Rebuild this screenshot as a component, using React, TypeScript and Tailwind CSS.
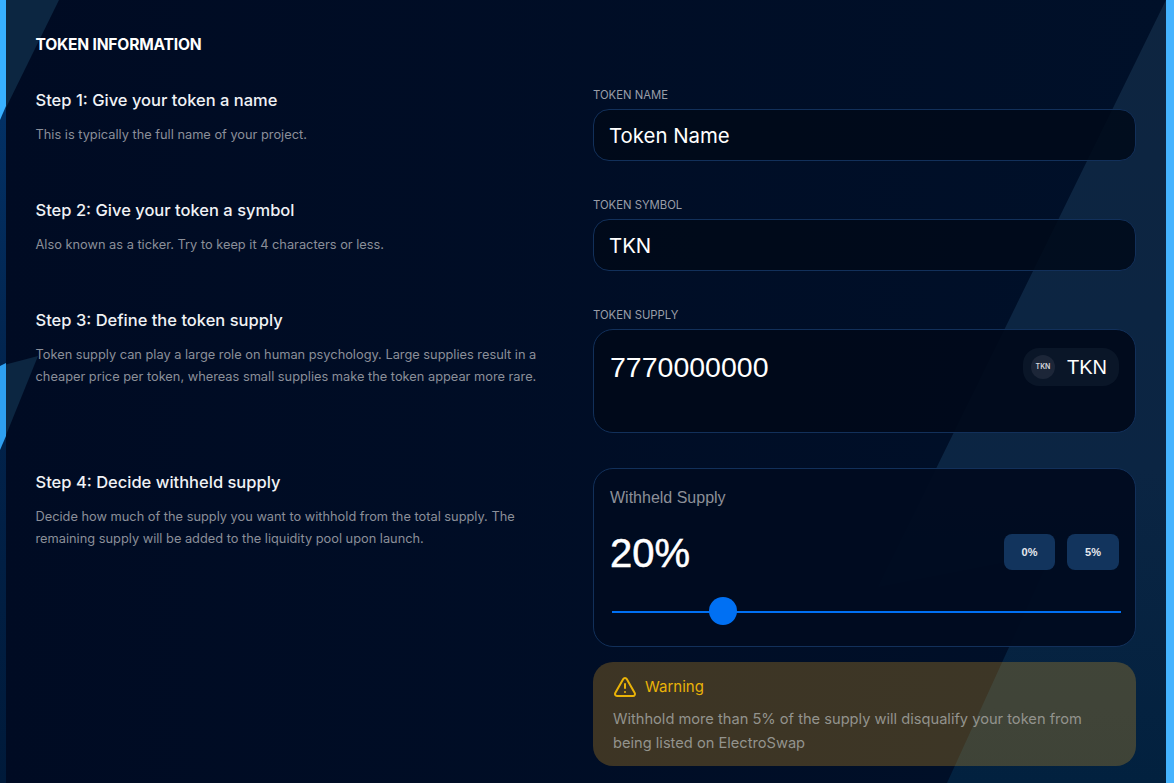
import { TriangleAlert } from "lucide-react";

const steps = [
  {
    title: "Step 1: Give your token a name",
    body: ["This is typically the full name of your project."],
    h: "h-[110px]",
  },
  {
    title: "Step 2: Give your token a symbol",
    body: ["Also known as a ticker. Try to keep it 4 characters or less."],
    h: "h-[110px]",
  },
  {
    title: "Step 3: Define the token supply",
    body: [
      "Token supply can play a large role on human psychology. Large supplies result in a",
      "cheaper price per token, whereas small supplies make the token appear more rare.",
    ],
    h: "h-[162px]",
  },
];

function Background() {
  return (
    <svg className="absolute inset-0 h-full w-full" viewBox="0 0 1174 783" aria-hidden="true">
      <defs>
        <linearGradient id="base" x1="0" y1="0" x2="1" y2="0">
          <stop offset="0" stopColor="#000b23" />
          <stop offset="1" stopColor="#001029" />
        </linearGradient>
        <linearGradient id="side" x1="0" y1="0" x2="0" y2="1">
          <stop offset="0" stopColor="#0e2540" />
          <stop offset="0.6" stopColor="#0b2543" />
          <stop offset="1" stopColor="#02213f" />
        </linearGradient>
        <linearGradient id="strip" x1="0" y1="0" x2="0" y2="1">
          <stop offset="0" stopColor="#03366f" />
          <stop offset="0.5" stopColor="#02234c" />
          <stop offset="1" stopColor="#001a3a" />
        </linearGradient>
      </defs>
      <rect width="1174" height="783" fill="url(#base)" />
      <polygon points="0,0 59,0 0,120" fill="#0c2641" />
      <polygon points="1166,0 1174,0 1174,783 947,783 1052,553 878,587" fill="url(#side)" />
      <polygon points="0,366 38,356 0,450" fill="#0c2641" />
      <rect width="6" height="783" fill="url(#strip)" />
      <polygon points="0,0 6,0 6,106 0,120" fill="#38b0ff" />
      <polygon points="0,366 6,363 6,436 0,450" fill="#2e9ff0" />
      <rect x="1166" width="8" height="783" fill="#45b4ff" />
    </svg>
  );
}

function Field({ label, value }: { label: string; value: string }) {
  return (
    <div className="h-[110px]">
      <div className="h-[20px] text-[11.3px] leading-[13px] text-[#9a9ea8]">{label}</div>
      <div className="flex h-[52px] items-center rounded-[16px] border border-[#12305a] bg-[#000919]/85 px-[15px] pt-[2px] text-[20.4px] text-white">
        {value}
      </div>
    </div>
  );
}

export default function App() {
  return (
    <div className="relative h-[783px] w-full overflow-hidden font-['Inter',sans-serif]">
      <Background />
      <div className="relative flex flex-col pl-[35.5px] pr-[38px] pt-[36px]">
        <h2 className="h-[50px] text-[15.6px] font-bold leading-[18px] tracking-[-0.2px] text-white">TOKEN INFORMATION</h2>
        <div className="flex">
          <div className="w-[557.5px]">
            {steps.map((s) => (
              <div key={s.title} className={s.h}>
                <div className="text-[16.5px] font-medium leading-[28px] text-[#f0f2f5]">{s.title}</div>
                <div className="mt-[10px] text-[12.8px] leading-[22px] text-[#8b8f99]">
                  {s.body.map((line) => (
                    <div key={line}>{line}</div>
                  ))}
                </div>
              </div>
            ))}
            <div>
              <div className="text-[16.5px] font-medium leading-[28px] text-[#f0f2f5]">Step 4: Decide withheld supply</div>
              <div className="mt-[10px] text-[12.8px] leading-[22px] text-[#8b8f99]">
                <div>Decide how much of the supply you want to withhold from the total supply. The</div>
                <div>remaining supply will be added to the liquidity pool upon launch.</div>
              </div>
            </div>
          </div>
          <div className="w-[543px] pt-[3px]">
            <Field label="TOKEN NAME" value="Token Name" />
            <Field label="TOKEN SYMBOL" value="TKN" />
            <div className="h-[159px]">
              <div className="h-[20px] text-[11.3px] leading-[13px] text-[#9a9ea8]">TOKEN SUPPLY</div>
              <div className="flex h-[104px] items-start justify-between rounded-[20px] border border-[#12305a] bg-[#000919]/90 pl-[16px] pr-[16px] pt-[18px]">
                <span className="font-['Liberation_Sans',sans-serif] text-[28.5px] leading-[38px] text-white">7770000000</span>
                <div className="flex h-[38px] items-center gap-[12px] rounded-[16px] bg-[#0a1628] pl-[8px] pr-[12px]">
                  <span className="flex h-[24px] w-[24px] items-center justify-center rounded-full bg-[#1c2638] text-[7px] font-semibold text-[#d5d8de]">TKN</span>
                  <span className="font-['Liberation_Sans',sans-serif] text-[20px] text-white">TKN</span>
                </div>
              </div>
            </div>
            <div className="flex h-[179px] flex-col rounded-[20px] border border-[#12305a] bg-[#000a20]/95 px-[16px] pt-[19px]">
              <span className="font-['Liberation_Sans',sans-serif] text-[16px] leading-[20px] text-[#8d9098]">Withheld Supply</span>
              <div className="mt-[24px] flex items-center justify-between">
                <span className="translate-y-px font-['Liberation_Sans',sans-serif] text-[40px] leading-[40px] text-white [-webkit-text-stroke:0.5px_white]">20%</span>
                <div className="flex gap-[12px]">
                  <span className="flex h-[36px] w-[51px] items-center justify-center rounded-[8px] bg-[#12345d] font-['Liberation_Sans',sans-serif] text-[11px] font-bold text-[#e6e9ee]">0%</span>
                  <span className="flex h-[36px] w-[52px] items-center justify-center rounded-[8px] bg-[#12345d] font-['Liberation_Sans',sans-serif] text-[11px] font-bold text-[#e6e9ee]">5%</span>
                </div>
              </div>
              <div className="relative mr-[-2px] ml-[2px] mt-[39px] h-[2px] bg-[#0070f3]">
                <span className="absolute left-[97px] top-[-14px] h-[28px] w-[28px] rounded-full bg-[#0070f3]" />
              </div>
            </div>
            <div className="mt-[15px] h-[104px] rounded-[20px] bg-[#f5ab1f]/25 px-[20px] pt-[13px]">
              <div className="flex items-center gap-[8px] text-[15px] leading-[24px] text-[#eab308]">
                <TriangleAlert size={24} strokeWidth={2} />
                <span>Warning</span>
              </div>
              <p className="mt-[8px] text-[14.65px] leading-[24px] text-[#93938d]">
                Withhold more than 5% of the supply will disqualify your token from being listed on ElectroSwap
              </p>
            </div>
          </div>
        </div>
      </div>
    </div>
  );
}
